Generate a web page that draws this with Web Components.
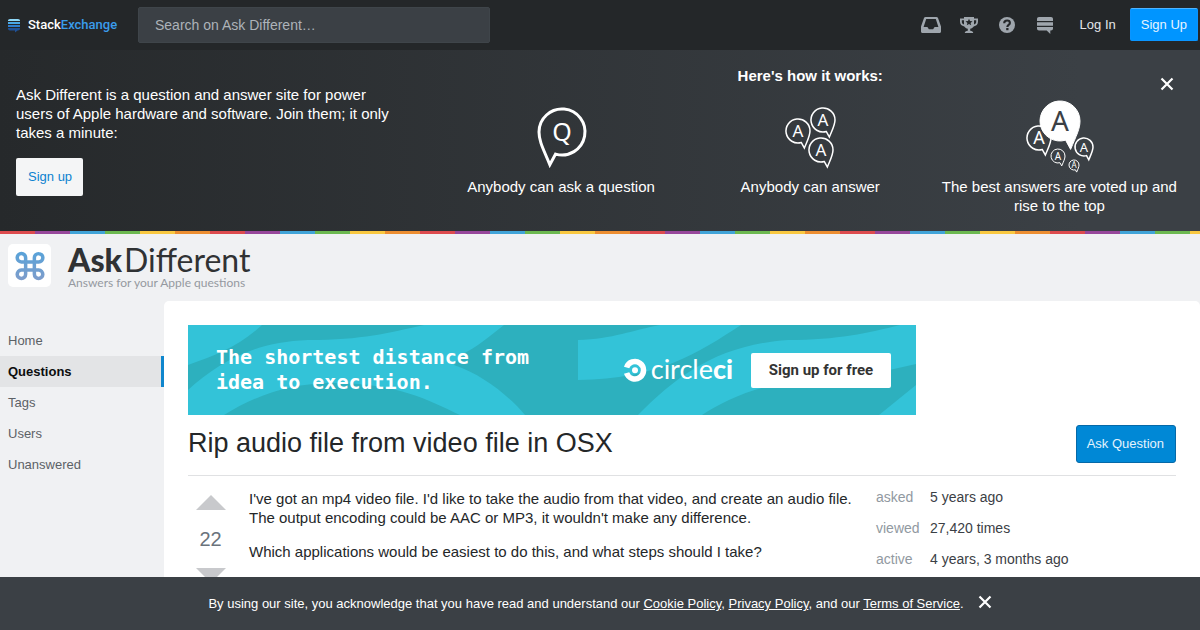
<!DOCTYPE html>
<html lang="en">
<head>
<meta charset="utf-8">
<meta name="viewport" content="width=device-width, initial-scale=1">
<title>Rip audio file from video file in OSX - Ask Different</title>
<style>
  :root { --ink: #242729; --slate: #3b4045; --muted: #9199a1; --blue: #0088d6; }
  body { margin: 0; background: #f0f1f3; color: var(--ink); font: 15px/19px "Liberation Sans", Arial, sans-serif; }
</style>
</head>
<body>
<ask-site></ask-site>
<script>
const define = (name, html, setup) => {
  const template = document.createElement('template');
  template.innerHTML = html;
  customElements.define(name, class extends HTMLElement {
    constructor() {
      super();
      this.attachShadow({ mode: 'open' }).append(template.content.cloneNode(true));
    }
    connectedCallback() { if (setup) setup(this, this.shadowRoot); }
  });
};

const cross = '<svg width="14" height="14" viewBox="0 0 14 14" aria-hidden="true"><path d="M1.5 1.5l11 11M12.5 1.5l-11 11" stroke="#fff" stroke-width="2.2"/></svg>';

/* ---- Top bar ---- */
const glyphs = {
  inbox: '<path fill-rule="evenodd" d="M4.6 1h10.8c.8 0 1.3.4 1.6 1l3 8.500V15.500c0 .9-.6 1.500-1.500 1.500H1.500C.6 17 0 16.400 0 15.500V10.500L3 2c.3-.6.8-1 1.600-1zM5.200 3L2.600 11H6c.5 0 .8.300 1 .7l.5 1c.2.4.6.6 1 .6h3c.4 0 .8-.2 1-.6l.5-1c.2-.4.5-.7 1-.7h3.400L14.800 3z"/>',
  trophy: '<path fill-rule="evenodd" d="M5 1h10v1.500h4v3.300c0 2.600-1.700 4.200-4.300 4.600-.8 1.300-2 2-3.500 2.400v2c1.800.2 3 .9 3 2.200H5.800c0-1.300 1.200-2 3-2.200v-2c-1.500-.4-2.700-1.100-3.500-2.400C2.700 10 1 8.400 1 5.800V2.500h4zM2.800 4.200v1.600c0 1.300.7 2.200 2.200 2.600V4.200zm12.200 0v4.200c1.500-.4 2.200-1.300 2.200-2.600V4.200zM10 2.800l-1 2.300-2.500.2 1.900 1.600-.6 2.400L10 8l2.200 1.300-.6-2.400 1.900-1.600-2.500-.2z"/>',
  help: '<circle cx="10" cy="9" r="8"/><path d="M7.200 7.200c0-1.700 1.200-2.700 2.900-2.700s2.800.9 2.800 2.400c0 1.900-2.600 2.100-2.600 4" fill="none" stroke="#242729" stroke-width="2.100"/><path d="M9.200 12h2.300v2.200H9.200z" fill="#242729"/>',
  sites: '<path d="M4 1h12c1.200 0 2 .8 2 2v2H2V3c0-1.200.8-2 2-2zM2 6.200h16v3.600H2zM2 11h16v1.500c0 1.200-.8 2-2 2h-.7V18L11.700 14.500H4c-1.200 0-2-.8-2-2z"/>'
};
define('nav-icon', `
<style>
  :host { display: block; }
  a { display: block; width: 20px; height: 18px; color: #9fa6ad; }
  svg { display: block; fill: currentColor; }
</style>
<a href="#"><svg width="20" height="18" viewBox="0 0 20 18" aria-hidden="true"></svg></a>`,
(host, root) => {
  root.querySelector('svg').innerHTML = glyphs[host.getAttribute('name')];
  root.querySelector('a').setAttribute('aria-label', host.getAttribute('label'));
});

define('top-bar', `
<style>
  :host { display: flex; align-items: center; box-sizing: border-box; height: 50px; padding: 0 2px 0 8px; background: var(--ink); font-size: 13px; }
  a { text-decoration: none; }
  .brand { display: flex; align-items: center; gap: 8px; width: 130px; color: #fff; font: 500 13px/20px Roboto, sans-serif; }
  .brand b { font-weight: 500; color: #3a9cec; }
  form { flex: 0 1 352px; }
  input { display: block; box-sizing: border-box; width: 100%; height: 36px; padding: 0 16px; border: 1px solid #3f454a; border-radius: 2px; background: var(--slate); color: #fff; font: 14px "Liberation Sans", Arial, sans-serif; }
  input::placeholder { color: #adb3b9; opacity: 1; }
  nav { display: flex; align-items: center; margin-left: auto; padding-bottom: 1px; gap: 18px; }
  .login { margin-left: 7px; color: #e4e6e8; }
  .join { box-sizing: border-box; height: 33px; margin-left: -4px; padding: 0 10px; border: 1px solid #0a95ff; border-top-color: #4db3ff; border-radius: 2px; background: #0095ff; color: #e8f4ff; line-height: 31px; }
</style>
<a class="brand" href="#">
  <svg width="12" height="16" viewBox="0 0 12 16" aria-hidden="true"><path fill="#8fd8f7" d="M2 2h8c1.200 0 2 .8 2 1.600v.4H0v-.4C0 2.800.8 2 2 2z"/><path fill="#4aa9e8" d="M0 5h12v2H0z"/><path fill="#2f7fd0" d="M0 8h12v2H0z"/><path fill="#1f5196" d="M0 11h12v.4c0 1.200-.8 2-2 2h-.5L7 15.500V13.400H2c-1.200 0-2-.8-2-2z"/></svg>
  <span>Stack<b>Exchange</b></span>
</a>
<form role="search"><input type="search" placeholder="Search on Ask Different…" aria-label="Search on Ask Different"></form>
<nav aria-label="Account">
  <nav-icon name="inbox" label="Inbox"></nav-icon>
  <nav-icon name="trophy" label="Achievements"></nav-icon>
  <nav-icon name="help" label="Help"></nav-icon>
  <nav-icon name="sites" label="Sites"></nav-icon>
  <a class="login" href="#">Log In</a>
  <a class="join" href="#">Sign Up</a>
</nav>`);

/* ---- Hero ---- */
const bubble = ({ x, y, r, size, letter = 'A', stroke = 1.5, flip = false, solid = false }) => `
  <g transform="translate(${x} ${y})">
    <path transform="scale(${flip ? -r : r} ${r})" d="M1 0C1 .4.82.72.53 1.42L.28 .96A1 1 0 1 1 1 0Z" fill="${solid ? '#fff' : 'none'}" stroke="#fff" stroke-width="${stroke}" vector-effect="non-scaling-stroke"/>
    <text text-anchor="middle" y="${Math.round(size * .36)}" font-size="${size}" fill="${solid ? '#3b4045' : '#fff'}">${letter}</text>
  </g>`;
const art = {
  ask: [{ x: 41, y: 32, r: 23, size: 25, letter: 'Q', stroke: 3, flip: true }],
  answer: [{ x: 28, y: 31, r: 12, size: 17 }, { x: 53, y: 20, r: 12, size: 17 }, { x: 51, y: 50, r: 12, size: 17 }],
  vote: [{ x: 20, y: 38, r: 12, size: 18 }, { x: 65, y: 47, r: 9, size: 13 }, { x: 39, y: 56, r: 7, size: 10, stroke: 1 },
         { x: 55, y: 65, r: 5, size: 8, stroke: 1 }, { x: 41, y: 21, r: 20, size: 28, stroke: 1, solid: true }]
};
define('hero-step', `
<style>
  :host { display: flex; flex-direction: column; align-items: center; gap: 4px; text-align: center; }
  svg { display: block; font-family: "Noto Sans", sans-serif; }
</style>
<svg width="80" height="73" viewBox="0 0 80 73"></svg>
<span><slot></slot></span>`,
(host, root) => { root.querySelector('svg').innerHTML = art[host.getAttribute('art')].map(bubble).join(''); });

define('hero-banner', `
<style>
  :host { display: block; position: relative; background: linear-gradient(90deg, #26292b, #3b4045 90%); color: #fff; }
  .inner { display: grid; grid-template-columns: 36fr 64fr; align-items: center; padding: 16px; }
  .pitch { padding-right: 32px; }
  p { margin: 0 0 16px; }
  .join { display: inline-block; padding: 0 11px 0 12px; border-radius: 2px; background: #f4f5f6; color: #0c82d0; font-size: 13px; line-height: 38px; text-decoration: none; }
  h2 { margin: 0 0 15px; font-size: 15px; line-height: 19px; text-align: center; }
  .steps { display: grid; grid-template-columns: repeat(3, 1fr); }
  button { position: absolute; top: 27px; right: 26px; padding: 0; border: 0; background: none; }
  button svg { display: block; }
  .stripe { height: 3px; background: repeating-linear-gradient(90deg, #dd4b4e 0 35px, #97479b 35px 70px, #41a4d8 70px 105px, #6cb950 105px 140px, #f9c840 140px 175px, #ed8e31 175px 210px); }
</style>
<div class="inner">
  <div class="pitch">
    <p>Ask Different is a question and answer site for power users of Apple hardware and software. Join them; it only takes a minute:</p>
    <a class="join" href="#">Sign up</a>
  </div>
  <div>
    <h2>Here's how it works:</h2>
    <div class="steps">
      <hero-step art="ask">Anybody can ask a question</hero-step>
      <hero-step art="answer">Anybody can answer</hero-step>
      <hero-step art="vote">The best answers are voted up and rise to the top</hero-step>
    </div>
  </div>
</div>
<button type="button" aria-label="Dismiss">${cross}</button>
<div class="stripe"></div>`);

/* ---- Site header and side navigation ---- */
define('site-header', `
<style>
  :host { display: block; height: 67px; }
  a { display: inline-flex; gap: 17px; padding: 10px 8px 0; text-decoration: none; }
  .mark { display: grid; place-items: center; width: 43px; height: 43px; border-radius: 5px; background: #fff; }
  .name, .tag { display: block; white-space: nowrap; }
  .name { color: #303234; font: 32px/32px Lato, sans-serif; }
  .name b { font-weight: 900; margin-right: 2px; }
  .tag { color: #9599a0; font: 12px/14px Lato, sans-serif; }
</style>
<a href="#">
  <span class="mark"><svg width="32" height="32" viewBox="1 1 22 22" fill="none" aria-hidden="true"><defs><linearGradient id="g" x1="0" y1="0" x2="0" y2="1"><stop stop-color="#5aa2d8"/><stop offset="1" stop-color="#7c9dcc"/></linearGradient></defs><path stroke="url(#g)" stroke-width="2.400" d="M18 3.500a2.800 2.800 0 0 0-3 2.800v11.400a2.900 2.900 0 1 0 3-2.900H6a2.900 2.900 0 1 0 3 2.900V6.300a2.900 2.900 0 1 0-3 2.900h12a2.850 2.850 0 1 0 0-5.700z"/></svg></span>
  <span><span class="name"><b>Ask</b>Different</span><span class="tag">Answers for your Apple questions</span></span>
</a>`);

define('side-link', `
<style>
  :host { display: block; }
  a { display: block; padding: 0 8px; color: #5c6166; font-size: 13px; line-height: 31px; text-decoration: none; }
  :host([current]) a { border-right: 3px solid #0f86cd; background: #e3e4e6; color: #0c0d0e; font-weight: bold; }
</style>
<a href="#"><slot></slot></a>`);
define('side-nav', `
<style>:host { display: block; padding-top: 24px; }</style>
<nav aria-label="Site">
  <side-link>Home</side-link>
  <side-link current>Questions</side-link>
  <side-link>Tags</side-link>
  <side-link>Users</side-link>
  <side-link>Unanswered</side-link>
</nav>`);

/* ---- Advertisement ---- */
define('ad-banner', `
<style>
  :host { display: block; max-width: 728px; }
  .ad { display: flex; position: relative; align-items: center; height: 90px; padding: 0 25px 0 28px; overflow: hidden; background: #2db0be; color: #fff; }
  .waves { position: absolute; inset: 0; }
  p, .logo, button { position: relative; }
  p { margin: 0 auto 0 0; font: bold 20px/25px "DejaVu Sans Mono", monospace; white-space: nowrap; }
  .logo { display: flex; align-items: center; gap: 4px; margin-right: 18px; color: #fff; font: 27px/30px Lato, sans-serif; text-decoration: none; }
  .logo span { padding-bottom: 3px; }
  .logo b { font-weight: 900; }
  button { height: 35px; width: 140px; margin-top: 1px; padding: 0 0 2px; border: 0; border-radius: 2px; background: #fff; color: #333; font: bold 15px Roboto, sans-serif; }
</style>
<div class="ad">
  <svg class="waves" width="728" height="90" viewBox="0 0 728 90" fill="#33c3d8" aria-hidden="true">
    <path d="M0 0H74C50 22 28 30 0 40z"/>
    <path d="M0 65C30 38 65 17 120 15C175 15 200 8 236 0H316C300 12 290 22 272 30L266 40C295 50 320 70 337 90H272C240 75 210 58 145 58C100 58 65 72 36 90H0z"/>
    <path d="M390 15C425 14 445 5 472 0H553C510 28 470 54 390 55z"/>
    <path d="M450 90C490 50 530 20 600 15C650 15 680 8 712 0H728V39C690 48 650 56 610 56C570 60 535 76 514 90z"/>
    <path d="M691 90L728 60V90z"/>
  </svg>
  <p>The shortest distance from<br>idea to execution.</p>
  <a class="logo" href="#"><svg width="24" height="24" viewBox="0 0 24 24" aria-hidden="true"><path fill="none" stroke="#fff" stroke-width="5.500" d="M3.600 9.500A8.700 8.700 0 1 1 3.600 15"/><circle cx="12" cy="12.200" r="3" fill="#fff"/></svg><span>circle<b>ci</b></span></a>
  <button type="button">Sign up for free</button>
</div>`);

/* ---- Question ---- */
define('vote-cell', `
<style>
  :host { display: flex; flex-direction: column; align-items: center; padding-top: 6px; color: #6a737c; }
  button { display: block; padding: 0; border: 0; background: none; }
  svg { display: block; fill: #c8c9cc; }
  span { padding: 17px 0; font-size: 20px; line-height: 24px; }
</style>
<button type="button" aria-label="Up vote"><svg width="30" height="15" viewBox="0 0 30 15"><path d="M15 0l15 15H0z"/></svg></button>
<span><slot></slot></span>
<button type="button" aria-label="Down vote"><svg width="30" height="15" viewBox="0 0 30 15"><path d="M15 15L0 0h30z"/></svg></button>`);

define('question-stats', `
<style>
  :host { display: block; }
  dl { display: grid; grid-template-columns: 54px 1fr; row-gap: 12px; margin: -1px 0 0; font-size: 14px; }
  dt { color: var(--muted); }
  dd { margin: 0; color: var(--slate); }
</style>
<dl>
  <dt>asked</dt><dd>5 years ago</dd>
  <dt>viewed</dt><dd>27,420 times</dd>
  <dt>active</dt><dd>4 years, 3 months ago</dd>
</dl>`);

define('question-page', `
<style>
  :host { display: block; padding: 24px 24px 0; border-radius: 5px 5px 0 0; background: #fff; }
  header { display: flex; justify-content: space-between; align-items: center; padding: 10px 0 12px; border-bottom: 1px solid #e0e1e3; }
  h1 { margin: 0; padding-bottom: 2px; font-size: 27px; line-height: 36px; font-weight: normal; }
  .ask { box-sizing: border-box; height: 38px; padding: 0 11px 0 10px; border: 1px solid #0569a8; border-radius: 3px; background: var(--blue); color: #e4f3fd; font-size: 13px; line-height: 36px; text-decoration: none; }
  .columns { display: grid; grid-template-columns: minmax(0, 1fr) 300px; gap: 24px; padding-top: 13px; }
  .post { display: grid; grid-template-columns: 45px minmax(0, 1fr); gap: 16px; }
  p { margin: 0 0 15px; }
</style>
<ad-banner></ad-banner>
<header>
  <h1>Rip audio file from video file in OSX</h1>
  <a class="ask" href="#">Ask Question</a>
</header>
<div class="columns">
  <div class="post">
    <vote-cell>22</vote-cell>
    <div>
      <p>I've got an mp4 video file. I'd like to take the audio from that video, and create an audio file. The output encoding could be AAC or MP3, it wouldn't make any difference.</p>
      <p>Which applications would be easiest to do this, and what steps should I take?</p>
    </div>
  </div>
  <question-stats></question-stats>
</div>`);

/* ---- Cookie notice ---- */
define('cookie-notice', `
<style>
  :host { display: flex; position: fixed; inset: auto 0 0; justify-content: center; align-items: center; gap: 14px; box-sizing: border-box; min-height: 53px; background: var(--slate); color: #fff; font-size: 13px; }
  a { color: inherit; }
  button { padding: 0 0 3px; border: 0; background: none; }
  button svg { display: block; }
</style>
<span>By using our site, you acknowledge that you have read and understand our <a href="#">Cookie Policy</a>, <a href="#">Privacy Policy</a>, and our <a href="#">Terms of Service</a>.</span>
<button type="button" aria-label="Dismiss">${cross}</button>`);

define('ask-site', `
<style>
  :host { display: flex; flex-direction: column; min-height: 100vh; }
  .body { display: grid; flex: 1; grid-template-columns: 164px minmax(0, 1fr); }
</style>
<top-bar></top-bar>
<hero-banner></hero-banner>
<site-header></site-header>
<div class="body">
  <side-nav></side-nav>
  <question-page></question-page>
</div>
<cookie-notice></cookie-notice>`);
</script>
</body>
</html>
